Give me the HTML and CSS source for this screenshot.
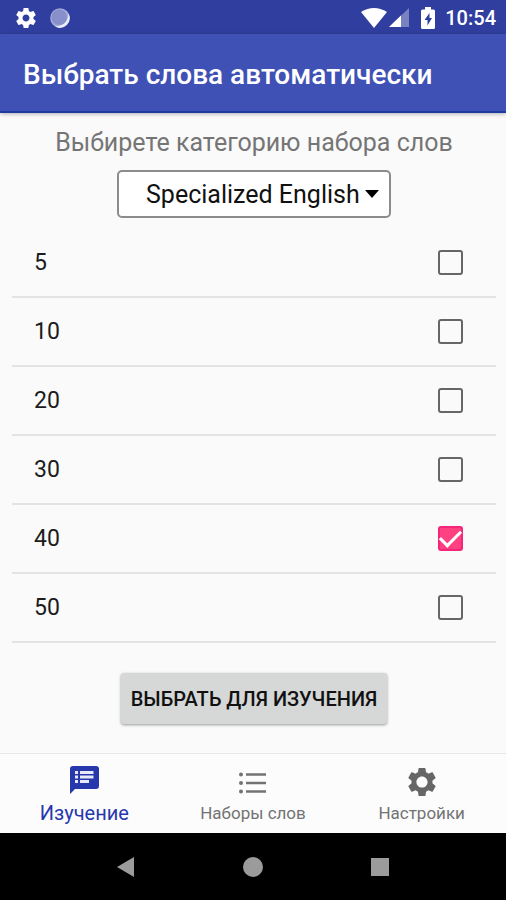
FILE: index.html
```html
<!DOCTYPE html>
<html lang="ru">
<head>
<meta charset="utf-8">
<meta name="viewport" content="width=device-width, initial-scale=1">
<title>Выбрать слова автоматически</title>
<link rel="stylesheet" href="styles.css">
</head>
<body>
<div class="status-bar">
  <div class="status-group">
    <svg class="status-gear" viewBox="2 2 20 20" aria-hidden="true"><path d="M19.43 12.98c.04-.32.07-.64.07-.98s-.03-.66-.07-.98l2.110-1.650c.19-.15.24-.42.12-.64l-2-3.460c-.12-.22-.39-.3-.61-.22l-2.490 1c-.52-.4-1.080-.73-1.690-.98l-.38-2.650C14.460 2.180 14.250 2 14 2h-4c-.25 0-.46.18-.49.42l-.38 2.650c-.61.25-1.170.59-1.690.98l-2.490-1c-.23-.09-.49 0-.61.22l-2 3.460c-.13.22-.07.49.12.64l2.110 1.650c-.04.32-.07.65-.07.98s.03.66.07.98l-2.110 1.650c-.19.15-.24.42-.12.64l2 3.460c.12.22.39.3.61.22l2.490-1c.52.4 1.080.73 1.690.98l.38 2.650c.03.24.24.42.49.42h4c.25 0 .46-.18.49-.42l.38-2.650c.61-.25 1.170-.59 1.690-.98l2.490 1c.23.09.49 0 .61-.22l2-3.460c.12-.22.07-.49-.12-.64l-2.110-1.650zM12 15.500c-1.930 0-3.500-1.570-3.500-3.500s1.570-3.500 3.500-3.500 3.500 1.570 3.500 3.500-1.570 3.500-3.500 3.500z"/></svg>
    <svg class="status-sync" viewBox="0 0 20 20" aria-hidden="true"><circle cx="10" cy="10" r="9.800" fill="#a3abd8"/><path d="M18.500 5.500A9.800 9.800 0 0 1 5 18.500C14 18 18 13 18.500 5.500z" fill="#e9ecfb"/><circle cx="9.200" cy="9.200" r="7.800" fill="#8790ca"/></svg>
  </div>
  <div class="status-group status-right">
    <svg class="wifi" viewBox="0 0 26 20" aria-hidden="true"><path d="M0 4Q13-4 26 4L13 20z"/></svg>
    <svg class="signal" viewBox="0 0 20 19" aria-hidden="true"><path d="M0 19L20 0V19z" opacity=".35"/><path d="M0 19L12 7.600V19z"/></svg>
    <svg class="battery" viewBox="0 0 14 22" aria-hidden="true"><path fill-rule="evenodd" d="M4 0h6v2.500h2.500Q14 2.500 14 4v16.500q0 1.500-1.500 1.500h-11Q0 22 0 20.500V4q0-1.500 1.500-1.500H4zM8.500 6L3.500 13h3v5.500l4.500-7.500H8.500z"/></svg>
    <span class="clock">10:54</span>
  </div>
</div>
<header class="app-bar"><h1>Выбрать слова автоматически</h1></header>
<main>
  <form class="picker">
    <label class="caption" for="category">Выбирете категорию набора слов</label>
    <div class="select-wrap">
      <select id="category"><option>Specialized English</option></select>
      <svg class="caret" viewBox="0 0 14 8" aria-hidden="true"><path d="M0 0h14L7 8z"/></svg>
    </div>
    <div class="rows">
      <label class="row">5<input type="checkbox"></label>
      <label class="row">10<input type="checkbox"></label>
      <label class="row">20<input type="checkbox"></label>
      <label class="row">30<input type="checkbox"></label>
      <label class="row">40<input type="checkbox" checked></label>
      <label class="row">50<input type="checkbox"></label>
    </div>
    <button class="submit" type="button">ВЫБРАТЬ ДЛЯ ИЗУЧЕНИЯ</button>
  </form>
</main>
<nav class="tabs">
  <a class="tab active" href="#study">
    <svg class="chat" viewBox="0 0 29 28" aria-hidden="true"><path d="M3 0h23q3 0 3 3v17q0 3-3 3H5l-5 5V3q0-3 3-3z"/><path class="lines" d="M5 5h3v3H5zM5 9.500h3v3H5zM5 14h3v3H5zM10 5h13.500v3H10zM10 9.500h13.500v3H10zM10 14h9v3h-9z"/></svg>
    <span>Изучение</span>
  </a>
  <a class="tab" href="#sets">
    <svg class="list" viewBox="0 0 27 22" aria-hidden="true"><circle cx="2" cy="2.500" r="2"/><circle cx="2" cy="11" r="2"/><circle cx="2" cy="19.500" r="2"/><path d="M7 1.300h20v2.400H7zM7 9.800h20v2.400H7zM7 18.300h20v2.400H7z"/></svg>
    <span>Наборы слов</span>
  </a>
  <a class="tab" href="#settings">
    <svg class="gear" viewBox="2 2 20 20" aria-hidden="true"><path d="M19.430 12.980c.04-.32.07-.64.07-.98s-.03-.66-.07-.98l2.110-1.650c.19-.15.24-.42.12-.64l-2-3.460c-.12-.22-.39-.3-.61-.22l-2.490 1c-.52-.4-1.080-.73-1.690-.98l-.38-2.650C14.460 2.180 14.250 2 14 2h-4c-.25 0-.46.18-.49.42l-.38 2.650c-.61.25-1.170.59-1.690.98l-2.490-1c-.23-.09-.49 0-.61.22l-2 3.460c-.13.22-.07.49.12.64l2.110 1.650c-.04.32-.07.65-.07.98s.03.66.07.98l-2.110 1.650c-.19.15-.24.42-.12.64l2 3.460c.12.22.39.3.61.22l2.490-1c.52.4 1.080.73 1.690.98l.38 2.650c.03.24.24.42.49.42h4c.25 0 .46-.18.49-.42l.38-2.650c.61-.25 1.170-.59 1.690-.98l2.490 1c.23.09.49 0 .61-.22l2-3.460c.12-.22.07-.49-.12-.64l-2.110-1.650zM12 16c-2.200 0-4-1.800-4-4s1.800-4 4-4 4 1.800 4 4-1.800 4-4 4z"/></svg>
    <span>Настройки</span>
  </a>
</nav>
<div class="system-bar">
  <button type="button" aria-label="Назад"><svg viewBox="0 0 20 20"><path d="M1 10L18 0v20z"/></svg></button>
  <button type="button" aria-label="Домой"><svg viewBox="0 0 20 20"><circle cx="10" cy="10" r="10"/></svg></button>
  <button type="button" aria-label="Обзор"><svg viewBox="0 0 20 20"><path d="M1 1h18v18H1z"/></svg></button>
</div>
</body>
</html>
```
FILE: styles.css
```css
* { box-sizing: border-box; }

body {
  margin: 0;
  min-height: 100vh;
  display: flex;
  flex-direction: column;
  background: #fafafa;
  color: #1c1c1c;
  font-family: Roboto, "Noto Sans", sans-serif;
}

svg { display: block; fill: currentColor; }

.status-bar {
  height: 34px;
  padding: 1px 10px 0 16px;
  display: flex;
  justify-content: space-between;
  align-items: center;
  background: #303f9f;
  color: #fff;
}
.status-group { display: flex; align-items: center; gap: 14px; }
.status-right { gap: 0; }
.status-gear, .status-sync { width: 20px; height: 20px; }
.wifi { width: 26px; height: 20px; margin-right: 2px; }
.signal { width: 20px; height: 19px; margin-right: 12px; }
.battery { width: 14px; height: 22px; margin-right: 10px; }
.clock { font-size: 20px; line-height: 24px; font-weight: 500; }

.app-bar {
  height: 79px;
  padding: 4px 23px 0;
  display: flex;
  align-items: center;
  background: #3f51b5;
  color: #fff;
  border-bottom: 2px solid #1b3ba0;
  box-shadow: 0 1px 4px rgba(0, 0, 0, 0.3);
}
h1 { margin: 0; font-size: 28px; line-height: 32px; font-weight: 500; }

main { flex: 1; padding: 14px 10px 0 12px; }
.picker { display: flex; flex-direction: column; align-items: center; }
.caption { font-size: 25px; line-height: 32px; color: #757575; }

.select-wrap { position: relative; margin-top: 11px; }
select {
  appearance: none;
  display: block;
  width: 274px;
  height: 48px;
  padding: 0 24px 0 27px;
  border: 2px solid #8c8c8c;
  border-radius: 5px;
  background: #fff;
  color: #111;
  font-family: inherit;
  font-size: 25px;
}
.caret {
  position: absolute;
  right: 12px;
  top: 20px;
  width: 14px;
  height: 8px;
  color: #000;
  pointer-events: none;
}

.rows { align-self: stretch; margin-top: 11px; }
.row {
  height: 69px;
  padding: 0 33px 0 22px;
  display: flex;
  justify-content: space-between;
  align-items: center;
  border-bottom: 2px solid #e3e3e3;
  font-size: 23px;
}
input {
  appearance: none;
  width: 25px;
  height: 25px;
  margin: 0;
  border: 2px solid #666;
  border-radius: 3px;
}
input:checked {
  display: grid;
  place-items: center;
  border-color: #f5257a;
  background: #ff4081;
}
input:checked::before {
  content: "";
  width: 18px;
  height: 9px;
  margin-bottom: 6px;
  border: solid #fff;
  border-width: 0 0 3px 3px;
  transform: rotate(-45deg);
}

.submit {
  height: 51px;
  margin-top: 30px;
  padding: 0 10px;
  border: 0;
  border-radius: 3px;
  background: #d6d7d7;
  color: #111;
  font: 500 20px/24px Roboto, "Noto Sans", sans-serif;
  box-shadow: 0 1px 3px rgba(0, 0, 0, 0.4);
}

.tabs {
  height: 80px;
  display: grid;
  grid-template-columns: repeat(3, 1fr);
  border-top: 1px solid #e8e8e8;
  background: #fcfcfc;
}
.tab {
  display: flex;
  flex-direction: column;
  align-items: center;
  justify-content: flex-end;
  padding-bottom: 8px;
  color: #737373;
  text-decoration: none;
  font-size: 17px;
  line-height: 24px;
}
.tab.active { color: #2638ab; font-size: 20px; }
.tab span { margin-top: 5px; }
.active span { margin-top: 7px; }
.chat { width: 29px; height: 28px; }
.lines { fill: #e8eafa; }
.list { width: 27px; height: 22px; margin-bottom: 2px; }
.gear { width: 28px; height: 28px; color: #666; }

.system-bar {
  height: 67px;
  padding: 0 63px;
  display: grid;
  grid-template-columns: repeat(3, 1fr);
  background: #000;
}
.system-bar button {
  display: grid;
  place-items: center;
  padding: 0;
  border: 0;
  background: none;
  color: #9b9b9b;
}
.system-bar svg { width: 20px; height: 20px; }
```
